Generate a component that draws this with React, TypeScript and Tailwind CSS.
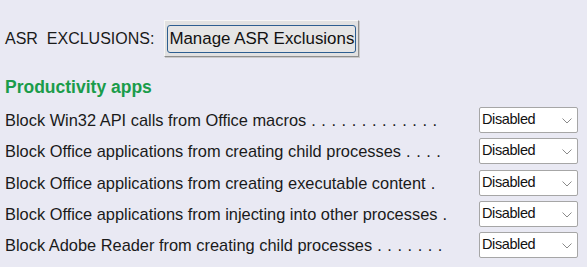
import React from "react";

const rows: [string, number][] = [
  ["Block Win32 API calls from Office macros", 13],
  ["Block Office applications from creating child processes", 4],
  ["Block Office applications from creating executable content", 1],
  ["Block Office applications from injecting into other processes", 1],
  ["Block Adobe Reader from creating child processes", 7],
];

const gaps = ["mt-[10px]", "mt-[5px]", "mt-[6px]", "mt-[5px]", "mt-[5px]"];

function Select() {
  return (
    <div className="w-[99px] h-[26px] bg-white border border-[#a6a6a6] rounded-[2px] flex items-center justify-between pl-[2px] pr-[5px]">
      <span
        className="text-[14.5px] text-[#111] tracking-[-0.4px]"
        style={{ fontFamily: '"Liberation Sans", Arial, sans-serif' }}
      >
        Disabled
      </span>
      <svg width="10" height="6" viewBox="0 0 10 6" className="mt-[1px]">
        <path d="M0.5 0.5 L5 5 L9.5 0.5" fill="none" stroke="#8a8a8a" strokeWidth="1" />
      </svg>
    </div>
  );
}

export default function App() {
  return (
    <div
      className="w-[587px] h-[267px] bg-[#e9e9f3] text-[#1a1a1a] overflow-hidden pt-[20px]"
      style={{ fontFamily: '"Liberation Sans", Arial, sans-serif' }}
    >
      <div className="flex items-center pl-[5px] h-[37px]">
        <span className="text-[16px] whitespace-pre">ASR  EXCLUSIONS:</span>
        <div className="ml-[10px] w-[195px] h-[37px] bg-[#e1e1e1] border border-[#f6f6f6] border-r-[#8f8f8f] border-b-[#8f8f8f] shadow-[1px_1px_0_#c9c9c9] flex items-start">
          <div className="ml-[2px] mt-[4px] w-[189px] h-[28px] border border-[#2d5e90] rounded-[3px] flex items-center justify-center bg-[#e5e5e5]">
            <span className="text-[16.9px] text-[#111] leading-none">Manage ASR Exclusions</span>
          </div>
        </div>
      </div>
      <div className="pl-[5px] mt-[20px] h-[20px] leading-[20px] text-[17.5px] font-bold text-[#1a9c4a]">
        Productivity apps
      </div>
      <div className="flex flex-col">
        {rows.map(([label, dots], i) => (
          <div key={i} className={`${gaps[i]} flex items-center justify-between pl-[5px] pr-[9px] h-[26px]`}>
            <span className="text-[16.4px] whitespace-pre">
              {label}
              <span className="tracking-[0.5px]">{" .".repeat(dots)}</span>
            </span>
            <Select />
          </div>
        ))}
      </div>
    </div>
  );
}
